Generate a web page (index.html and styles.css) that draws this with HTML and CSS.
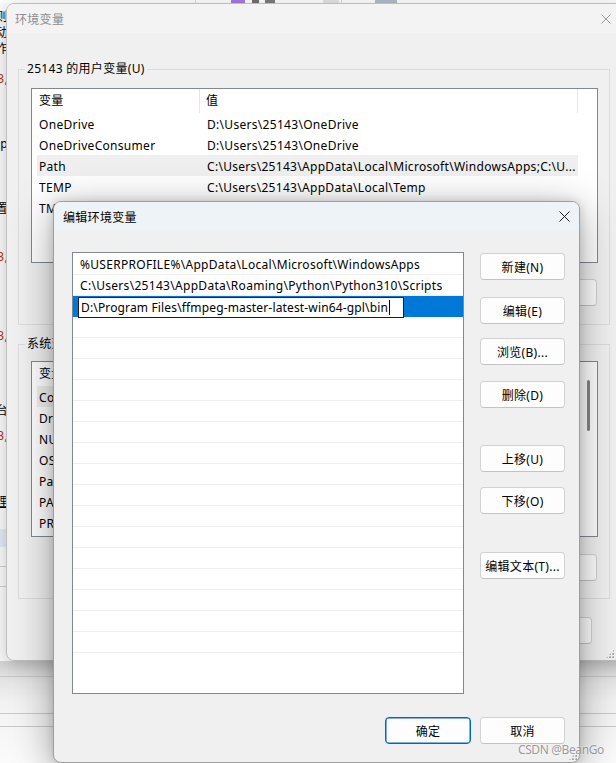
FILE: index.html
```html
<!DOCTYPE html>
<html lang="zh-CN">
<head>
<meta charset="utf-8">
<title>编辑环境变量</title>
<link rel="stylesheet" href="styles.css">
</head>
<body>
<div class="back">
  <div class="back-top">
    <span class="bt-vline bt-v1"></span>
    <span class="bt-purple"></span>
    <span class="bt-dark"></span>
    <span class="bt-gray"></span>
    <span class="bt-vline bt-v2"></span>
    <span class="bt-name"></span>
  </div>
  <div class="back-body">
    <div class="back-left">
      <div class="bl">规则</div>
      <div class="bl">启动</div>
      <div class="bl">操作</div>
      <div class="bl red">3,</div>
      <div class="bl">Startup</div>
      <div class="bl">设置</div>
      <div class="bl red">3,</div>
      <div class="bl red">3,</div>
      <div class="bl">平台</div>
      <div class="bl red">3,</div>
      <div class="bl ul">管理</div>
      <div class="bl sel"></div>
      <div class="bl sep"></div>
      <div class="bl sep"></div>
    </div>
  </div>
  <div class="back-bottom">
    <div class="bb-row bb-r1"></div>
    <div class="bb-row bb-r2"></div>
    <div class="bb-row bb-r3"></div>
  </div>
</div>

<div class="env">
  <div class="env-title">
    <span>环境变量</span>
    <svg class="x-icon env-x" width="10" height="10" viewBox="0 0 10 10"><path d="M0.5 0.5L9.5 9.5M9.5 0.5L0.5 9.5" stroke="#9a9a9a" stroke-width="1" fill="none"/></svg>
  </div>
  <div class="env-body">
    <fieldset class="group g1">
      <legend>25143 的用户变量(U)</legend>
      <div class="lv lv-user">
        <div class="lv-main">
          <div class="lv-head"><div class="c1">变量</div><div class="c2">值</div></div>
          <div class="lv-row"><div class="c1">OneDrive</div><div class="c2">D:\Users\25143\OneDrive</div></div>
          <div class="lv-row"><div class="c1">OneDriveConsumer</div><div class="c2">D:\Users\25143\OneDrive</div></div>
          <div class="lv-row hot"><div class="c1">Path</div><div class="c2">C:\Users\25143\AppData\Local\Microsoft\WindowsApps;C:\U...</div></div>
          <div class="lv-row"><div class="c1">TEMP</div><div class="c2">C:\Users\25143\AppData\Local\Temp</div></div>
          <div class="lv-row"><div class="c1">TMP</div><div class="c2">C:\Users\25143\AppData\Local\Temp</div></div>
        </div>
      </div>
      <div class="env-btns">
        <button class="btn">新建(N)...</button>
        <button class="btn">编辑(E)...</button>
        <button class="btn">删除(D)</button>
      </div>
    </fieldset>
    <fieldset class="group g2">
      <legend>系统变量(S)</legend>
      <div class="lv lv-sys">
        <div class="lv-main">
          <div class="lv-head"><div class="c1">变量</div><div class="c2">值</div></div>
          <div class="lv-row hot"><div class="c1">ComSpec</div><div class="c2">C:\Windows\system32\cmd.exe</div></div>
          <div class="lv-row"><div class="c1">DriverData</div><div class="c2">C:\Windows\System32\Drivers\DriverData</div></div>
          <div class="lv-row"><div class="c1">NUMBER_OF_PROCESSORS</div><div class="c2">16</div></div>
          <div class="lv-row"><div class="c1">OS</div><div class="c2">Windows_NT</div></div>
          <div class="lv-row"><div class="c1">Path</div><div class="c2">C:\Windows\system32;C:\Windows</div></div>
          <div class="lv-row"><div class="c1">PATHEXT</div><div class="c2">.COM;.EXE;.BAT;.CMD;.VBS</div></div>
          <div class="lv-row"><div class="c1">PROCESSOR_ARCHITECTURE</div><div class="c2">AMD64</div></div>
        </div>
        <div class="lv-scroll"><div class="thumb"></div></div>
      </div>
      <div class="env-btns">
        <button class="btn">新建(W)...</button>
        <button class="btn">编辑(I)...</button>
        <button class="btn">删除(L)</button>
      </div>
    </fieldset>
    <div class="env-foot">
      <button class="btn">确定</button>
      <button class="btn">取消</button>
    </div>
  </div>
  <div class="grip env-grip"></div>
</div>

<div class="edit">
  <div class="edit-title">
    <span>编辑环境变量</span>
    <svg class="x-icon" width="11" height="11" viewBox="0 0 11 11"><path d="M0.5 0.5L10.5 10.5M10.5 0.5L0.5 10.5" stroke="#1a1a1a" stroke-width="1" fill="none"/></svg>
  </div>
  <div class="edit-body">
    <div class="edit-main">
      <div class="elist">
        <div class="erow">%USERPROFILE%\AppData\Local\Microsoft\WindowsApps</div>
        <div class="erow">C:\Users\25143\AppData\Roaming\Python\Python310\Scripts</div>
        <div class="erow selected"><div class="editbox"><span>D:\Program Files\ffmpeg-master-latest-win64-gpl\bin</span><span class="caret"></span></div></div>
        <div class="erow"></div><div class="erow"></div><div class="erow"></div><div class="erow"></div>
        <div class="erow"></div><div class="erow"></div><div class="erow"></div><div class="erow"></div>
        <div class="erow"></div><div class="erow"></div><div class="erow"></div><div class="erow"></div>
        <div class="erow"></div><div class="erow"></div><div class="erow"></div><div class="erow"></div>
        <div class="erow last"></div>
      </div>
      <div class="ebtns">
        <button class="btn b-new">新建(N)</button>
        <button class="btn b-edit">编辑(E)</button>
        <button class="btn b-browse">浏览(B)...</button>
        <button class="btn b-del">删除(D)</button>
        <button class="btn b-up">上移(U)</button>
        <button class="btn b-down">下移(O)</button>
        <button class="btn b-text">编辑文本(T)...</button>
      </div>
    </div>
    <div class="edit-foot">
      <button class="btn primary">确定</button>
      <button class="btn">取消</button>
    </div>
  </div>
  <div class="grip edit-grip"></div>
</div>

<div class="watermark">CSDN @BeanGo</div>
</body>
</html>
```

FILE: styles.css
```css
* { box-sizing: border-box; margin: 0; padding: 0; }
html, body { width: 616px; height: 763px; overflow: hidden; }
body {
  position: relative;
  font-family: "Noto Sans", "Noto Sans CJK SC", sans-serif;
  font-size: 12px;
  letter-spacing: 0.3px;
  color: #000;
  background: #f6f6f6;
}

/* ---------- background window ---------- */
.back {
  position: absolute;
  left: 0; top: 0; width: 616px; height: 763px;
  display: flex; flex-direction: column;
  background: #fbfbfb;
}
.back-top { height: 3px; display: flex; align-items: stretch; overflow: hidden; background: #fff; }
.bt-vline { width: 1px; background: #d6d6d6; }
.bt-v1 { margin-left: 195px; }
.bt-purple { width: 14px; margin-left: 35px; background: #a77be0; }
.bt-dark { width: 23px; margin-left: 7px; background: linear-gradient(90deg, #333 0 30%, transparent 30% 55%, #444 55%); opacity: .7; }
.bt-gray { width: 16px; margin-left: 48px; background: #e4e4e4; }
.bt-v2 { margin-left: 2px; }
.bt-name { width: 22px; margin-left: 33px; background: #7d8fa8; opacity: .6; }

.back-body { flex: 1; display: flex; }
.back-left { width: 8px; display: flex; flex-direction: column; }
.bl {
  height: 16px; line-height: 16px; font-size: 12px;
  display: flex; justify-content: flex-end; overflow: hidden; white-space: nowrap;
}
.bl.red { color: #c42b1c; }
.bl.ul { text-decoration: underline; }
.bl:nth-child(1) { margin-top: 6px; }
.bl:nth-child(4) { margin-top: 14px; }
.bl:nth-child(5) { margin-top: 49px; }
.bl:nth-child(6) { margin-top: 49px; }
.bl:nth-child(7) { margin-top: 32px; }
.bl:nth-child(8) { margin-top: 63px; }
.bl:nth-child(9) { margin-top: 59px; }
.bl:nth-child(10) { margin-top: 9px; }
.bl:nth-child(11) { margin-top: 50px; }
.bl.sel { margin-top: 19px; height: 18px; background: #e3ebf5; }
.bl.sep { margin-top: 19px; height: 1px; background: #d0d0d0; }

.back-bottom { height: 102px; display: flex; flex-direction: column; background: linear-gradient(180deg, #d6d6d6, #f2f2f2 40%, #fbfbfb); }
.bb-r1 { margin-top: 15px; height: 37px; border-top: 1px solid #c9c9c9; }
.bb-r2 { height: 13px; border-top: 1px solid #c9c9c9; }
.bb-r3 { border-top: 1px solid #c9c9c9; }

/* ---------- environment variables window (inactive) ---------- */
.env {
  position: absolute;
  left: 6px; top: 3px; width: 626px; height: 658px;
  border: 1px solid #bdbdbd;
  border-radius: 8px;
  background: #f0f0f0;
  box-shadow: 0 4px 18px rgba(0,0,0,.22);
  overflow: hidden;
  display: flex; flex-direction: column;
}
.env-title {
  height: 29px; flex: none;
  display: flex; align-items: center; justify-content: space-between;
  padding-left: 8px; padding-right: 20px;
  color: #8d8d8d;
  background: #f3f3f3;
}
.env-body { display: flex; flex-direction: column; padding-left: 11px; }

.group {
  width: 592px;
  border: 1px solid #dcdcdc;
  padding: 11px 11px 18px 12px;
}
.group legend {
  line-height: 16px; padding: 0 2px; margin-left: -6px;
}
.g1 { margin-top: 28px; }
.g2 { margin-top: 11px; padding-top: 9px; padding-bottom: 17px; }

.lv {
  width: 567px;
  border: 1px solid #828790;
  background: #fff;
  display: flex;
}
.lv-user { height: 175px; }
.lv-sys { height: 176px; }
.lv-main { width: 546px; display: flex; flex-direction: column; }
.lv-head { height: 24px; display: flex; align-items: center; }
.lv-head .c1 { width: 168px; height: 24px; line-height: 24px; padding-left: 7px; border-right: 1px solid #e5e5e5; }
.lv-head .c2 { width: 378px; height: 24px; line-height: 24px; padding-left: 6px; border-right: 1px solid #e5e5e5; }
.lv-row { height: 21px; margin-left: 5px; width: 541px; display: flex; align-items: center; white-space: nowrap; padding-top: 1px; }
.lv-row.hot { background: #efefef; }
.lv-row .c1 { width: 163px; padding-left: 2px; overflow: hidden; }
.lv-row .c2 { flex: 1; padding-left: 7px; overflow: hidden; }
.lv-scroll { width: 19px; padding-top: 18px; padding-left: 9px; }
.thumb { width: 3px; height: 51px; border-radius: 2px; background: #868686; }

.env-btns { display: flex; justify-content: flex-end; gap: 9px; margin-top: 16px; margin-right: 1px; }
.env-btns .btn { width: 76px; }
.g2 .env-btns { margin-top: 17px; }
.env-foot { display: flex; justify-content: flex-end; gap: 9px; width: 574px; margin-top: 18px; }
.env-foot .btn { width: 76px; }

.grip {
  position: absolute; width: 10px; height: 10px;
  background-image: radial-gradient(circle, #9a9a9a 0.9px, transparent 1.1px);
  background-size: 3.3px 3.3px;
  clip-path: polygon(100% 0, 100% 100%, 0 100%);
}
.env-grip { right: 16px; bottom: 1px; }

/* ---------- buttons ---------- */
.btn {
  height: 27px;
  font: inherit;
  letter-spacing: inherit;
  color: #000;
  background: #fdfdfd;
  border: 1px solid #d2d2d2;
  border-bottom-color: #c3c3c3;
  border-radius: 4px;
  display: flex; align-items: center; justify-content: center;
  white-space: nowrap;
}
.btn.primary { border: 1px solid #0067c0; box-shadow: inset 0 0 0 0.5px #0067c0; }

/* ---------- edit dialog ---------- */
.edit {
  position: absolute;
  left: 53px; top: 201px; width: 527px; height: 562px;
  border: 1px solid #9e9e9e;
  border-radius: 8px;
  background: #f0f0f0;
  box-shadow: 0 8px 40px rgba(0,0,0,.36), 0 0 10px rgba(0,0,0,.14);
  overflow: hidden;
  display: flex; flex-direction: column;
}
.edit-title {
  height: 29px; flex: none;
  display: flex; align-items: center; justify-content: space-between;
  padding-left: 9px; padding-right: 9px;
  background: #eef3f8;
  color: #000;
}
.edit-body { flex: 1; display: flex; flex-direction: column; padding: 21px 14px 18px 18px; }
.edit-main { display: flex; }
.elist {
  width: 392px; height: 442px;
  border: 1px solid #828790;
  background: #fff;
  padding-top: 1px;
  display: flex; flex-direction: column;
  overflow: hidden;
}
.erow {
  height: 21px; flex: none;
  border-bottom: 1px solid #efefef;
  padding-left: 7px;
  padding-top: 1px;
  line-height: 20px;
  white-space: nowrap;
}
.erow.selected { background: #0078d7; padding-left: 5px; padding-top: 0; border-bottom-color: #0078d7; }
.erow.last { border-bottom: none; }
.editbox {
  width: 326px; height: 21px;
  margin-top: 1px;
  background: #fff;
  border: 1px solid #1e1e1e;
  display: flex; align-items: center;
  padding-left: 2px;
  line-height: 18px;
  letter-spacing: 0.15px;
  overflow: hidden;
}
.caret { width: 1px; height: 15px; background: #000; margin-left: 1px; flex: none; }

.ebtns { display: flex; flex-direction: column; margin-left: 16px; }
.ebtns .btn { width: 85px; }
.b-new { margin-top: 1px; }
.b-edit { margin-top: 17px; }
.b-browse { margin-top: 14px; }
.b-del { margin-top: 16px; }
.b-up { margin-top: 37px; }
.b-down { margin-top: 15px; }
.b-text { margin-top: 38px; }

.edit-foot { display: flex; justify-content: flex-end; gap: 9px; margin-top: 23px; }
.edit-foot .btn { width: 86px; }
.edit-foot .btn + .btn { width: 85px; }
.edit-grip { right: 1px; bottom: 1px; }

.watermark {
  position: absolute;
  left: 518px; top: 741px;
  font-size: 12px;
  letter-spacing: -0.4px;
  white-space: nowrap;
  color: rgba(120,120,120,.75);
  text-shadow: 0 0 2px #fff;
}
```
